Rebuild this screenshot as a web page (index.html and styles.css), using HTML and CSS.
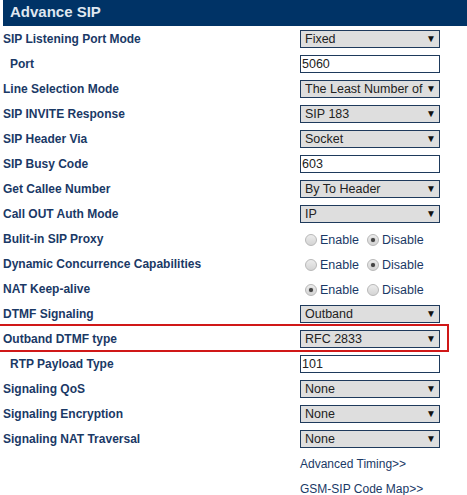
FILE: index.html
```html
<!DOCTYPE html>
<html>
<head>
<meta charset="utf-8">
<link rel="stylesheet" href="styles.css">
</head>
<body>
<div class="page">
  <div class="title">Advance SIP</div>
  <div class="row"><div class="label">SIP Listening Port Mode</div><div class="ctl"><div class="sel"><span>Fixed</span><i>▼</i></div></div></div>
  <div class="row"><div class="label sub">Port</div><div class="ctl"><div class="inp">5060</div></div></div>
  <div class="row"><div class="label">Line Selection Mode</div><div class="ctl"><div class="sel"><span>The Least Number of Calls</span><i>▼</i></div></div></div>
  <div class="row"><div class="label">SIP INVITE Response</div><div class="ctl"><div class="sel"><span>SIP 183</span><i>▼</i></div></div></div>
  <div class="row"><div class="label">SIP Header Via</div><div class="ctl"><div class="sel"><span>Socket</span><i>▼</i></div></div></div>
  <div class="row"><div class="label">SIP Busy Code</div><div class="ctl"><div class="inp">603</div></div></div>
  <div class="row"><div class="label">Get Callee Number</div><div class="ctl"><div class="sel"><span>By To Header</span><i>▼</i></div></div></div>
  <div class="row"><div class="label">Call OUT Auth Mode</div><div class="ctl"><div class="sel"><span>IP</span><i>▼</i></div></div></div>
  <div class="row"><div class="label">Bulit-in SIP Proxy</div><div class="ctl radios"><span class="radio"></span><span class="rtxt">Enable</span><span class="radio on"></span><span class="rtxt">Disable</span></div></div>
  <div class="row"><div class="label">Dynamic Concurrence Capabilities</div><div class="ctl radios"><span class="radio"></span><span class="rtxt">Enable</span><span class="radio on"></span><span class="rtxt">Disable</span></div></div>
  <div class="row"><div class="label">NAT Keep-alive</div><div class="ctl radios"><span class="radio on"></span><span class="rtxt">Enable</span><span class="radio"></span><span class="rtxt">Disable</span></div></div>
  <div class="row"><div class="label">DTMF Signaling</div><div class="ctl"><div class="sel"><span>Outband</span><i>▼</i></div></div></div>
  <div class="row hl"><div class="label">Outband DTMF type</div><div class="ctl"><div class="sel"><span>RFC 2833</span><i>▼</i></div></div></div>
  <div class="row"><div class="label sub">RTP Payload Type</div><div class="ctl"><div class="inp">101</div></div></div>
  <div class="row"><div class="label">Signaling QoS</div><div class="ctl"><div class="sel"><span>None</span><i>▼</i></div></div></div>
  <div class="row"><div class="label">Signaling Encryption</div><div class="ctl"><div class="sel"><span>None</span><i>▼</i></div></div></div>
  <div class="row"><div class="label">Signaling NAT Traversal</div><div class="ctl"><div class="sel"><span>None</span><i>▼</i></div></div></div>
  <div class="row"><div class="label"></div><div class="ctl"><a class="link">Advanced Timing&gt;&gt;</a></div></div>
  <div class="row"><div class="label"></div><div class="ctl"><a class="link">GSM-SIP Code Map&gt;&gt;</a></div></div>
</div>
</body>
</html>
```
FILE: styles.css
```css
html, body {
  margin: 0;
  padding: 0;
  background: #fff;
  overflow: hidden;
}
.page {
  width: 467px;
  font-family: "Liberation Sans", Arial, sans-serif;
}
.title {
  margin-left: 3px;
  height: 26px;
  line-height: 24px;
  padding-left: 7px;
  background: #003366;
  color: #dfe7f0;
  font-weight: bold;
  font-size: 15px;
}
.row {
  position: relative;
  display: grid;
  grid-template-columns: 300px 1fr;
  height: 25px;
  align-items: center;
}
.row.hl::after {
  content: "";
  position: absolute;
  left: -4px;
  right: 18px;
  top: -2px;
  bottom: -1px;
  border: 2px solid #d01818;
}
.label {
  padding-left: 3px;
  font-size: 12px;
  font-weight: bold;
  color: #1a3966;
}
.label.sub {
  padding-left: 10px;
}
.ctl {
  display: flex;
  align-items: center;
  font-size: 12.5px;
  color: #222;
}
.sel {
  width: 140px;
  height: 18px;
  box-sizing: border-box;
  border: 1px solid #1e3a5c;
  background: #dedede;
  display: flex;
  align-items: center;
  padding-left: 4px;
  padding-right: 3px;
  overflow: hidden;
}
.sel span {
  flex: 1;
  white-space: nowrap;
  overflow: hidden;
  font-size: 12.5px;
}
.sel i {
  font-style: normal;
  font-size: 10px;
  color: #111;
  margin-left: 1px;
}
.inp {
  width: 140px;
  height: 18px;
  box-sizing: border-box;
  border: 1px solid #1e3a5c;
  background: #fff;
  padding-left: 1px;
  line-height: 16px;
  font-size: 12.5px;
}
.radios {
  padding-left: 5px;
  padding-top: 3px;
}
.radio {
  width: 12px;
  height: 12px;
  border-radius: 50%;
  border: 1px solid #b8b8b8;
  background: linear-gradient(#ececec, #d4d4d4);
  box-sizing: border-box;
  position: relative;
  margin-right: 3px;
}
.radio.on::after {
  content: "";
  position: absolute;
  left: 3px;
  top: 3px;
  width: 4px;
  height: 4px;
  border-radius: 50%;
  background: #444;
  box-shadow: 0 0 1px #666;
}
.rtxt {
  color: #1a3966;
  font-size: 12.5px;
  margin-right: 8px;
}
.link {
  color: #1a3966;
  font-size: 12px;
}
```
